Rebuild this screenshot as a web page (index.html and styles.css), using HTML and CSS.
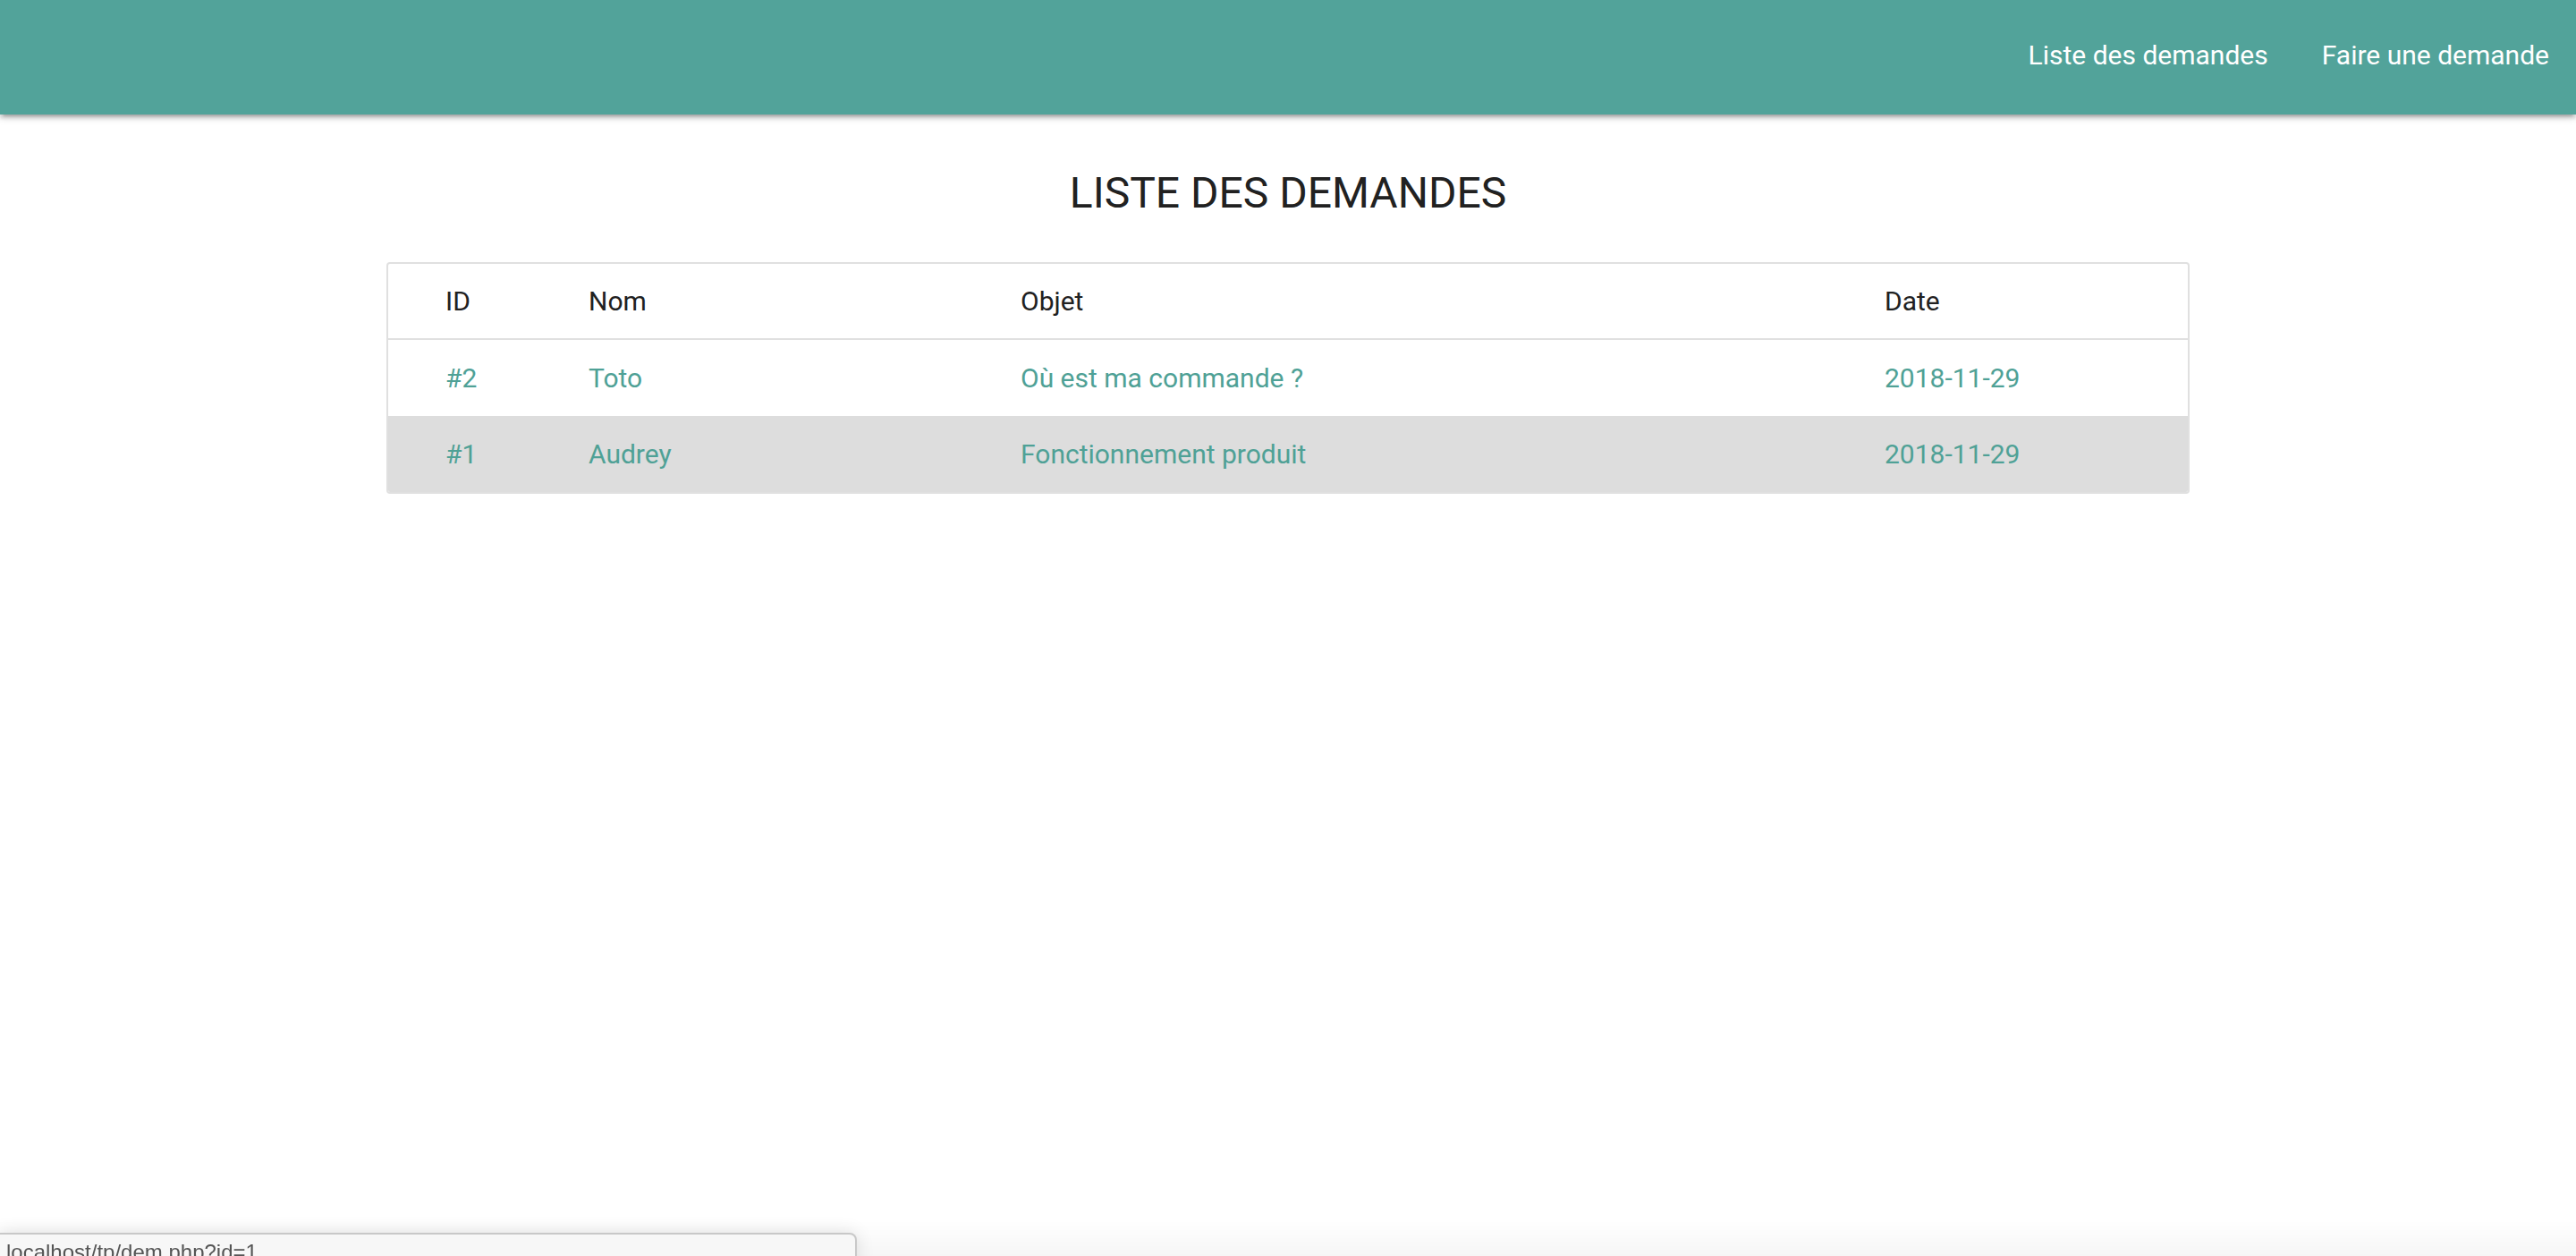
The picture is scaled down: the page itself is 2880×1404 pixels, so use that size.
FILE: index.html
```html
<!DOCTYPE html>
<html lang="fr">
<head>
<meta charset="utf-8">
<title>Liste des demandes</title>
<link rel="stylesheet" href="styles.css">
</head>
<body>
<nav class="navbar">
  <ul class="nav-links">
    <li><a href="#">Liste des demandes</a></li>
    <li><a href="#">Faire une demande</a></li>
  </ul>
</nav>
<main class="container">
  <h1 class="page-title">LISTE DES DEMANDES</h1>
  <table class="requests">
    <colgroup>
      <col class="c-id"><col class="c-nom"><col class="c-obj"><col class="c-date">
    </colgroup>
    <thead>
      <tr><th>ID</th><th>Nom</th><th>Objet</th><th>Date</th></tr>
    </thead>
    <tbody>
      <tr><td>#2</td><td>Toto</td><td>Où est ma commande ?</td><td>2018-11-29</td></tr>
      <tr class="hover"><td>#1</td><td>Audrey</td><td>Fonctionnement produit</td><td>2018-11-29</td></tr>
    </tbody>
  </table>
</main>
<div class="bottom-fade"></div>
<div class="status-bar">localhost/tp/dem.php?id=1</div>
</body>
</html>
```

FILE: styles.css
```css
html, body {
  margin: 0;
  padding: 0;
  background: #ffffff;
}
body {
  font-family: Roboto, "Noto Sans", sans-serif;
  color: rgba(0, 0, 0, 0.87);
  overflow: hidden;
  height: 1404px;
}
.navbar {
  height: 128px;
  background: #52a39a;
  display: flex;
  justify-content: flex-end;
  box-shadow: 0 4px 4px 0 rgba(0,0,0,0.14), 0 6px 2px -4px rgba(0,0,0,0.12), 0 2px 10px 0 rgba(0,0,0,0.2);
  position: relative;
  z-index: 2;
}
.nav-links {
  list-style: none;
  margin: 0;
  padding: 0;
  display: flex;
}
.nav-links a {
  display: block;
  padding: 0 30px;
  line-height: 124px;
  font-size: 30px;
  color: #ffffff;
  text-decoration: none;
}
.container {
  width: 2016px;
  margin: 0 auto;
}
.page-title {
  margin: 60px 0 49px;
  font-size: 48px;
  line-height: 56px;
  font-weight: 400;
  text-align: center;
  color: #212121;
}
.requests {
  width: 2016px;
  border-collapse: separate;
  border-spacing: 0;
  border: 2px solid #e0e0e0;
  border-radius: 4px;
  overflow: hidden;
  table-layout: fixed;
  font-size: 30px;
}
.c-id { width: 214px; }
.c-nom { width: 483px; }
.c-obj { width: 966px; }
.c-date { width: 349px; }
.requests th, .requests td {
  text-align: left;
  font-weight: 400;
  line-height: 45px;
  padding: 20px 10px;
}
.requests th:first-child, .requests td:first-child {
  padding-left: 64px;
}
.requests th {
  padding-top: 19px;
  padding-bottom: 19px;
  color: #212121;
  border-bottom: 2px solid #e0e0e0;
}
.requests td {
  color: #4fa196;
}
.requests tr.hover td {
  background: #dddddd;
}
.bottom-fade {
  position: fixed;
  left: 0;
  right: 0;
  bottom: 0;
  height: 40px;
  background: linear-gradient(to bottom, rgba(0,0,0,0), rgba(0,0,0,0.035));
  z-index: 3;
}
.status-bar {
  position: fixed;
  left: 0;
  top: 1378px;
  width: 958px;
  height: 40px;
  padding: 6px 0 0 7px;
  box-sizing: border-box;
  background: #f7f7f7;
  border: 2px solid #c8c8c8;
  border-left: none;
  border-top-right-radius: 8px;
  box-shadow: 0 0 20px rgba(0,0,0,0.12);
  font-family: "Liberation Sans", Arial, sans-serif;
  font-size: 24px;
  line-height: 28px;
  color: #555555;
  white-space: nowrap;
  z-index: 4;
}
```
